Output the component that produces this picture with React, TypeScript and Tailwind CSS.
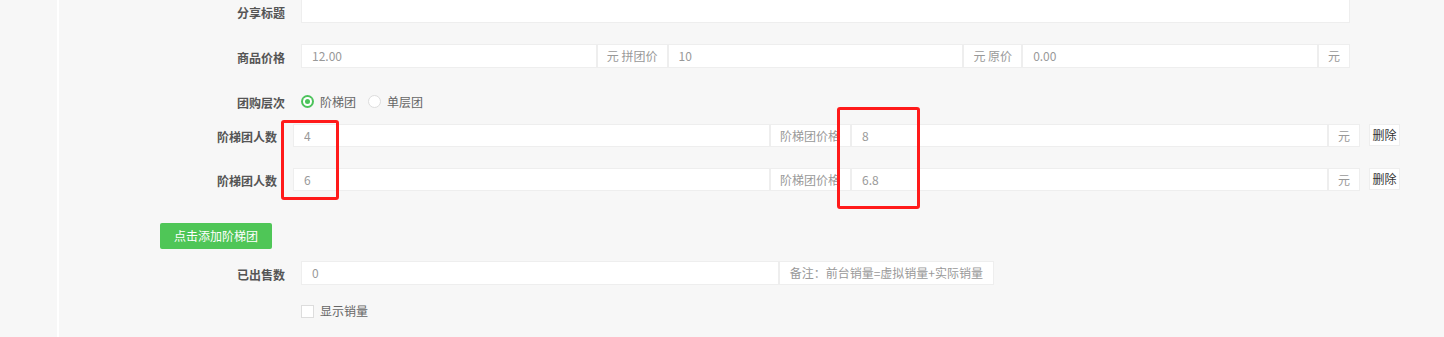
import React, { useState } from 'react';

const FONT = "font-['Noto_Sans_CJK_SC','Liberation_Sans',sans-serif]";

function Field({ value, className = '' }: { value: string; className?: string }) {
  return (
    <input
      defaultValue={value}
      className={`w-0 min-w-0 flex-1 border border-[#eeeeee] bg-white pl-[10px] text-[12px] text-[#999] outline-none ${className}`}
    />
  );
}

function Addon({ children, className = '' }: { children: React.ReactNode; className?: string }) {
  return (
    <span
      className={`flex shrink-0 items-center whitespace-nowrap border border-[#eeeeee] bg-white px-[9px] text-[12px] text-[#999] ${className}`}
    >
      {children}
    </span>
  );
}

function Label({ text, width = 'w-[242px]' }: { text: string; width?: string }) {
  return (
    <label className={`${width} mt-[3px] shrink-0 pr-[16px] text-right text-[12px] font-bold text-[#555]`}>
      {text}
    </label>
  );
}

export default function App() {
  const [level, setLevel] = useState<'ladder' | 'single'>('ladder');
  const [showSales, setShowSales] = useState(false);
  const [tiers, setTiers] = useState([
    { count: '4', price: '8' },
    { count: '6', price: '6.8' }
  ]);

  return (
    <div className={`relative flex h-[337px] w-full overflow-hidden bg-[#f7f7f7] ${FONT}`}>
      <div className="w-[57px] shrink-0" />
      <div className="w-[2px] shrink-0 bg-white" />

      <div className="flex w-[1385px] shrink-0 flex-col">
        {/* 分享标题 */}
        <div className="mt-[-1px] flex h-[24px] items-center">
          <Label text="分享标题" />
          <div className="flex h-full w-[1049px]">
            <Field value="" />
          </div>
        </div>

        {/* 商品价格 */}
        <div className="mt-[21px] flex h-[24px] items-center">
          <Label text="商品价格" />
          <div className="flex h-full w-[1049px]">
            <Field value="12.00" />
            <Addon>元 拼团价</Addon>
            <Field value="10" />
            <Addon>元 原价</Addon>
            <Field value="0.00" />
            <Addon>元</Addon>
          </div>
        </div>

        {/* 团购层次 */}
        <div className="mt-[23px] flex h-[20px] items-center">
          <Label text="团购层次" />
          <button type="button" onClick={() => setLevel('ladder')} className="flex items-center">
            <span
              className={`flex h-[13px] w-[13px] items-center justify-center rounded-full ${
                level === 'ladder' ? 'bg-[#4cc35b]' : 'border border-[#dddddd] bg-white'
              }`}
            >
              {level === 'ladder' && (
                <span className="flex h-[9px] w-[9px] items-center justify-center rounded-full bg-white">
                  <span className="h-[5px] w-[5px] rounded-full bg-[#4cc35b]" />
                </span>
              )}
            </span>
            <span className="ml-[6px] mt-[2px] text-[12px] text-[#666]">阶梯团</span>
          </button>
          <button type="button" onClick={() => setLevel('single')} className="ml-[12px] flex items-center">
            <span
              className={`flex h-[13px] w-[13px] items-center justify-center rounded-full ${
                level === 'single' ? 'bg-[#4cc35b]' : 'border border-[#dddddd] bg-white'
              }`}
            >
              {level === 'single' && (
                <span className="flex h-[9px] w-[9px] items-center justify-center rounded-full bg-white">
                  <span className="h-[5px] w-[5px] rounded-full bg-[#4cc35b]" />
                </span>
              )}
            </span>
            <span className="ml-[6px] mt-[2px] text-[12px] text-[#666]">单层团</span>
          </button>
        </div>

        {/* 阶梯团 rows */}
        <div className="mt-[13px] flex flex-col gap-[21px]">
          {tiers.map((tier, i) => (
            <div key={i} className="flex h-[23px] items-center">
              <Label text="阶梯团人数" width="w-[234px]" />
              <div className="flex h-full w-[1067px] shrink-0">
                <Field value={tier.count} />
                <Addon className="w-[81px] overflow-hidden">阶梯团价格</Addon>
                <Field value={tier.price} />
                <Addon>元</Addon>
              </div>
              <button
                type="button"
                onClick={() => setTiers(tiers.filter((_, j) => j !== i))}
                className="ml-[9px] h-[22px] w-[31px] shrink-0 self-start whitespace-nowrap border border-[#eeeeee] bg-white text-[12px] text-[#333]"
              >
                删除
              </button>
            </div>
          ))}
        </div>

        {/* 添加按钮 */}
        <div className="mt-[32px] flex pl-[101px]">
          <button
            type="button"
            onClick={() => setTiers([...tiers, { count: '', price: '' }])}
            className="h-[26px] w-[112px] rounded-[2px] bg-[#4fc657] text-[12px] text-white"
          >
            点击添加阶梯团
          </button>
        </div>

        {/* 已出售数 */}
        <div className="mt-[12px] flex h-[24px] items-center">
          <Label text="已出售数" />
          <div className="flex h-full w-[693px]">
            <Field value="0" />
            <Addon className="px-[10px]">备注：前台销量=虚拟销量+实际销量</Addon>
          </div>
        </div>

        {/* 显示销量 */}
        <div className="mt-[17px] flex items-center pl-[242px]">
          <button type="button" onClick={() => setShowSales(!showSales)} className="flex items-center">
            <span
              className={`flex h-[13px] w-[13px] items-center justify-center border ${
                showSales ? 'border-[#4cc35b] bg-[#4cc35b]' : 'border-[#dddddd] bg-white'
              }`}
            >
              {showSales && <span className="text-[9px] leading-none text-white">✓</span>}
            </span>
            <span className="ml-[6px] text-[12px] text-[#666]">显示销量</span>
          </button>
        </div>
      </div>

      {/* annotation boxes */}
      <div className="pointer-events-none absolute left-[281px] top-[120px] h-[80px] w-[58px] rounded-[3px] border-[3px] border-[#ff1a1a]" />
      <div className="pointer-events-none absolute left-[837px] top-[107px] h-[102px] w-[83px] rounded-[3px] border-[3px] border-[#ff1a1a]" />
    </div>
  );
}
